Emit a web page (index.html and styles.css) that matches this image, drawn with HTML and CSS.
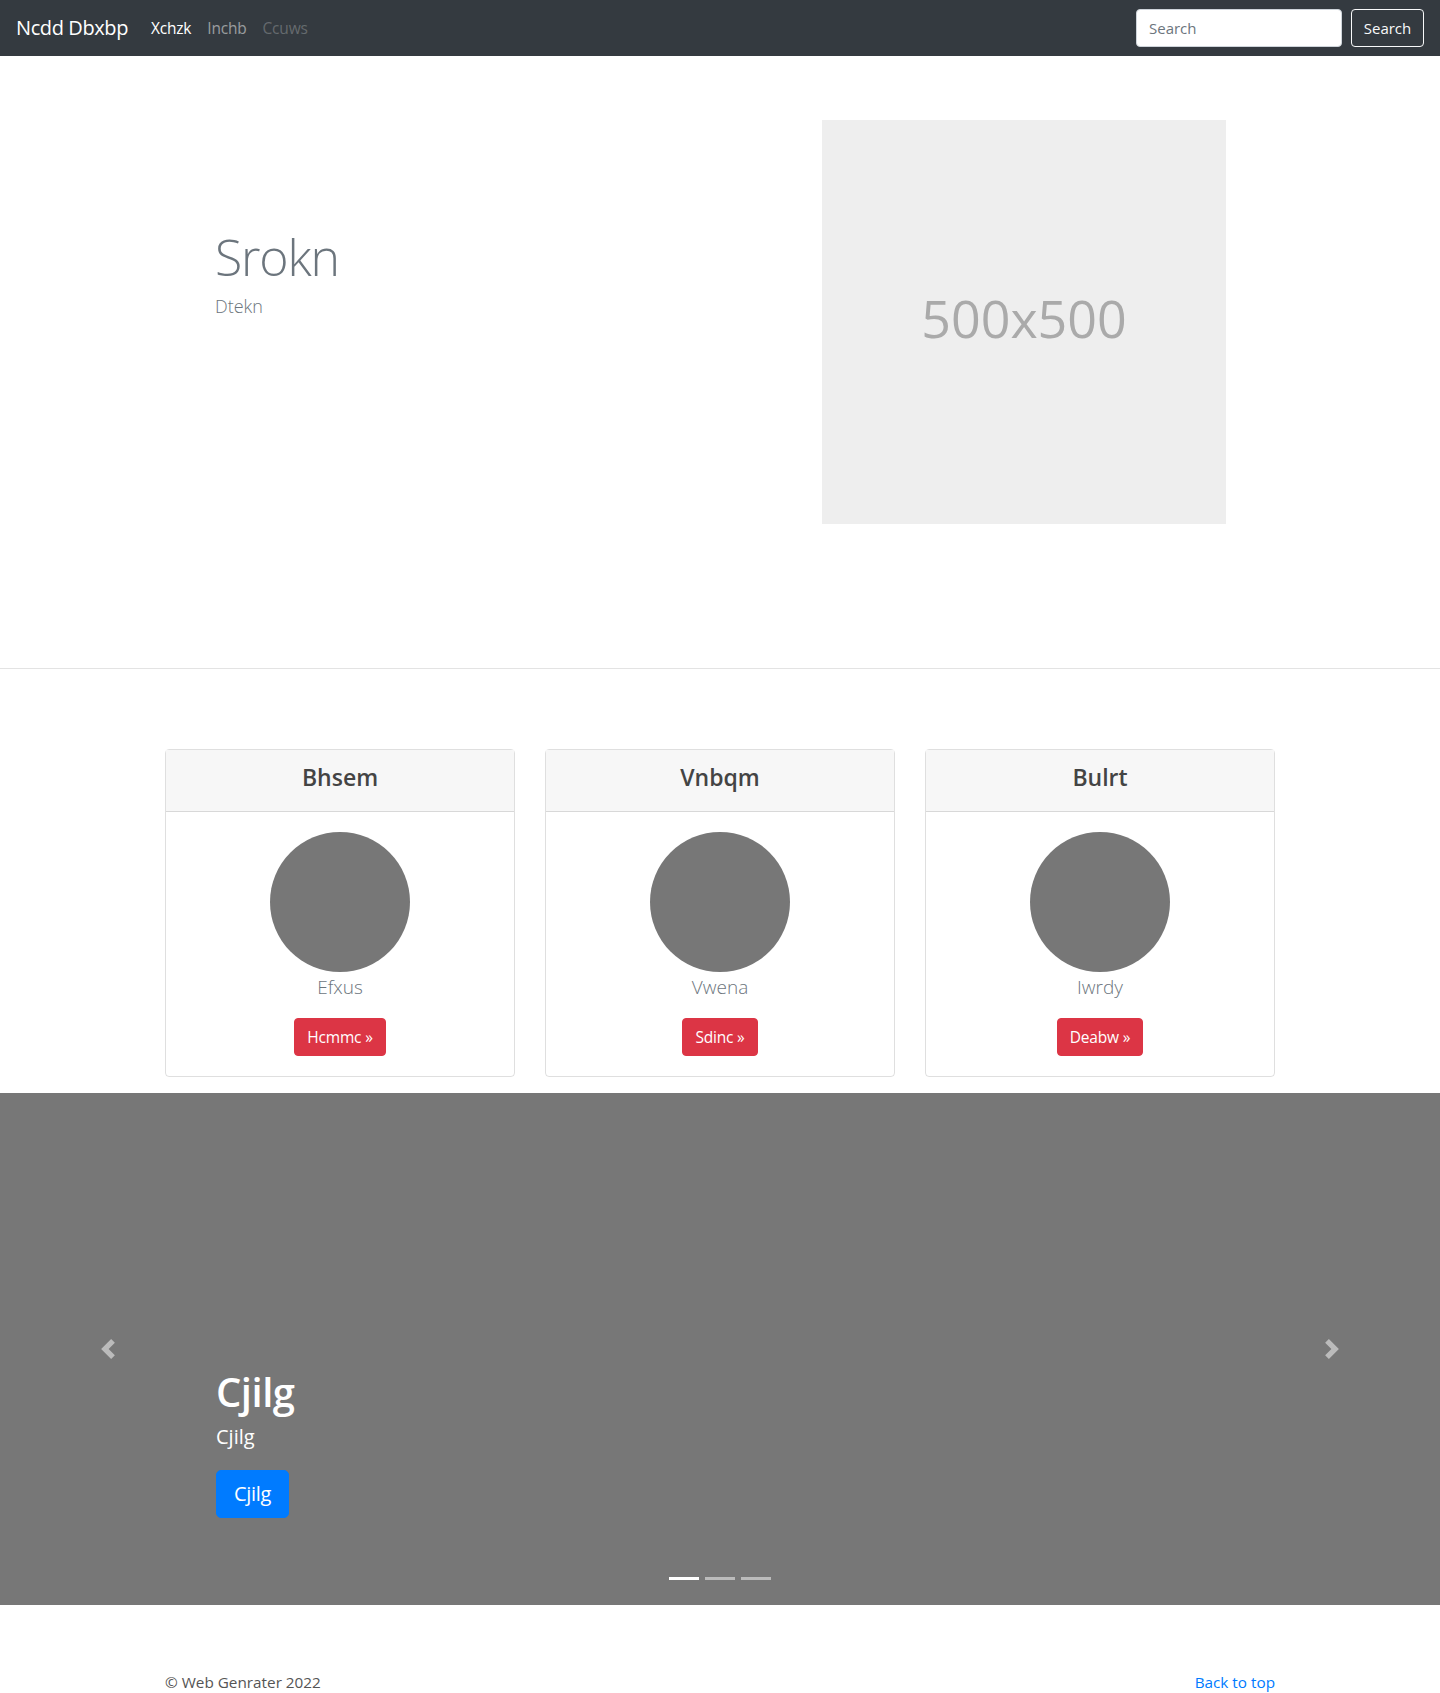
FILE: index.html
```html
<!DOCTYPE html>
<html lang="en">
<head>
<meta charset="utf-8">
<title>Ncdd Dbxbp</title>
<link rel="stylesheet" href="styles.css">
</head>
<body>
<nav class="navbar">
  <a class="brand" href="#">Ncdd Dbxbp</a>
  <ul class="nav-links">
    <li><a class="nav-link active" href="#">Xchzk</a></li>
    <li><a class="nav-link" href="#">Inchb</a></li>
    <li><a class="nav-link disabled" href="#">Ccuws</a></li>
  </ul>
  <form class="search-form">
    <input class="search-input" type="text" placeholder="Search">
    <button class="search-btn" type="button">Search</button>
  </form>
</nav>

<section class="hero">
  <div class="hero-text">
    <h1 class="hero-title">Srokn</h1>
    <p class="hero-lead">Dtekn</p>
  </div>
  <div class="hero-image">500x500</div>
</section>
<hr class="divider">

<section class="cards">
  <div class="card">
    <div class="card-header"><h4>Bhsem</h4></div>
    <div class="card-body">
      <div class="avatar"></div>
      <p class="card-name">Efxus</p>
      <a class="btn-red" href="#">Hcmmc »</a>
    </div>
  </div>
  <div class="card">
    <div class="card-header"><h4>Vnbqm</h4></div>
    <div class="card-body">
      <div class="avatar"></div>
      <p class="card-name">Vwena</p>
      <a class="btn-red" href="#">Sdinc »</a>
    </div>
  </div>
  <div class="card">
    <div class="card-header"><h4>Bulrt</h4></div>
    <div class="card-body">
      <div class="avatar"></div>
      <p class="card-name">Iwrdy</p>
      <a class="btn-red" href="#">Deabw »</a>
    </div>
  </div>
</section>

<section class="carousel">
  <a class="carousel-control prev" href="#">
    <svg width="20" height="20" viewBox="0 0 8 8"><path fill="#fff" d="M5.25 0l-4 4 4 4 1.5-1.5L4.25 4l2.5-2.5L5.25 0z"/></svg>
  </a>
  <div class="carousel-caption">
    <h1>Cjilg</h1>
    <p>Cjilg</p>
    <a class="btn-blue" href="#">Cjilg</a>
  </div>
  <a class="carousel-control next" href="#">
    <svg width="20" height="20" viewBox="0 0 8 8"><path fill="#fff" d="M2.75 0l-1.5 1.5L3.75 4l-2.5 2.5L2.75 8l4-4-4-4z"/></svg>
  </a>
  <ol class="indicators">
    <li class="on"></li>
    <li></li>
    <li></li>
  </ol>
</section>

<footer class="footer">
  <p>© Web Genrater 2022</p>
  <a href="#">Back to top</a>
</footer>
</body>
</html>
```

FILE: styles.css
```css
* { box-sizing: border-box; }
body {
  margin: 0;
  font-family: "Open Sans", "Noto Sans", sans-serif;
  font-size: 16px;
  line-height: 1.5;
  color: #212529;
  background: #fff;
}
a { text-decoration: none; }

.navbar {
  height: 56px;
  background: #343a40;
  display: flex;
  align-items: center;
  padding: 0 16px;
}
.brand {
  color: #fff;
  font-size: 20px;
  margin-right: 15px;
  letter-spacing: -0.4px;
}
.nav-links {
  list-style: none;
  margin: 0;
  padding: 0;
  display: flex;
  flex: 1;
}
.nav-link {
  display: block;
  padding: 9px 8px 7px;
  color: rgba(255,255,255,.5);
  font-size: 15.5px;
  letter-spacing: -0.2px;
}
.nav-link.active { color: #fff; }
.nav-link.disabled { color: rgba(255,255,255,.25); }
.search-form { display: flex; align-items: center; }
.search-input {
  width: 206px;
  height: 38px;
  border: 1px solid #ced4da;
  border-radius: 4px;
  padding: 6px 12px;
  font-family: inherit;
  font-size: 15px;
  color: #495057;
  margin-right: 9px;
}
.search-input::placeholder { color: #6c757d; }
.search-btn {
  height: 38px;
  width: 73px;
  background: transparent;
  border: 1px solid #f8f9fa;
  border-radius: 4px;
  color: #f8f9fa;
  font-family: inherit;
  font-size: 15px;
  padding: 0;
}

.hero {
  display: flex;
  padding: 64px 0 144px 215px;
}
.hero-text {
  width: 607px;
  padding-top: 107px;
  color: #6c757d;
}
.hero-title {
  margin: 0;
  font-size: 50px;
  font-weight: 300;
  line-height: 1.2;
  letter-spacing: -1.2px;
}
.hero-lead {
  margin: 6px 0 0;
  font-size: 18px;
  font-weight: 300;
  line-height: 1.5;
}
.hero-image {
  width: 404px;
  height: 404px;
  background: #eee;
  color: #aaa;
  font-size: 52px;
  display: flex;
  align-items: center;
  justify-content: center;
  padding-bottom: 8px;
}
.divider {
  margin: 0;
  border: 0;
  border-top: 1px solid #e3e3e3;
}

.cards {
  display: flex;
  gap: 30px;
  padding: 80px 165px 0;
  margin-bottom: 16px;
}
.card {
  width: 350px;
  border: 1px solid rgba(0,0,0,.125);
  border-radius: 4px;
  text-align: center;
}
.card-header {
  background: #f7f7f7;
  border-bottom: 1px solid rgba(0,0,0,.125);
  height: 62px;
  display: flex;
  align-items: center;
  justify-content: center;
  padding-bottom: 6px;
}
.card-header h4 {
  margin: 0;
  font-size: 23px;
  font-weight: 600;
  color: #444;
}
.card-body {
  padding: 20px 20px 20px;
  display: flex;
  flex-direction: column;
  align-items: center;
}
.avatar {
  width: 140px;
  height: 140px;
  border-radius: 50%;
  background: #777;
}
.card-name {
  margin: 0 0 16px;
  font-size: 19px;
  font-weight: 300;
  line-height: 30px;
  color: #6c757d;
}
.btn-red {
  display: inline-block;
  height: 38px;
  line-height: 36px;
  padding: 0 12px;
  border: 1px solid #dc3545;
  background: #dc3545;
  color: #fff;
  border-radius: 4px;
  font-size: 15.5px;
  letter-spacing: -0.2px;
}

.carousel {
  position: relative;
  height: 512px;
  background: #777;
  display: flex;
  align-items: center;
  justify-content: space-between;
}
.carousel-control {
  width: 216px;
  height: 100%;
  display: flex;
  align-items: center;
  justify-content: center;
  opacity: .5;
}
.carousel-caption {
  flex: 1;
  align-self: flex-end;
  padding-bottom: 87px;
  color: #fff;
}
.carousel-caption h1 {
  margin: 0 0 6px;
  font-size: 40px;
  font-weight: 600;
  line-height: 1.2;
  letter-spacing: -0.5px;
}
.carousel-caption p {
  margin: 0 0 18px;
  font-size: 20px;
  line-height: 30px;
}
.btn-blue {
  display: inline-block;
  height: 48px;
  line-height: 46px;
  padding: 0 17px;
  background: #007bff;
  border: 1px solid #007bff;
  border-radius: 5px;
  color: #fff;
  font-size: 20px;
  letter-spacing: -0.3px;
}
.indicators {
  position: absolute;
  left: 0;
  right: 0;
  bottom: 25px;
  margin: 0;
  padding: 0;
  list-style: none;
  display: flex;
  justify-content: center;
  gap: 6px;
}
.indicators li {
  width: 30px;
  height: 3px;
  background: rgba(255,255,255,.5);
}
.indicators li.on { background: #fff; }

.footer {
  display: flex;
  justify-content: space-between;
  align-items: baseline;
  padding: 66px 165px 32px;
  font-size: 15.3px;
}
.footer p { margin: 0; color: #555; }
.footer a { color: #007bff; }
```
